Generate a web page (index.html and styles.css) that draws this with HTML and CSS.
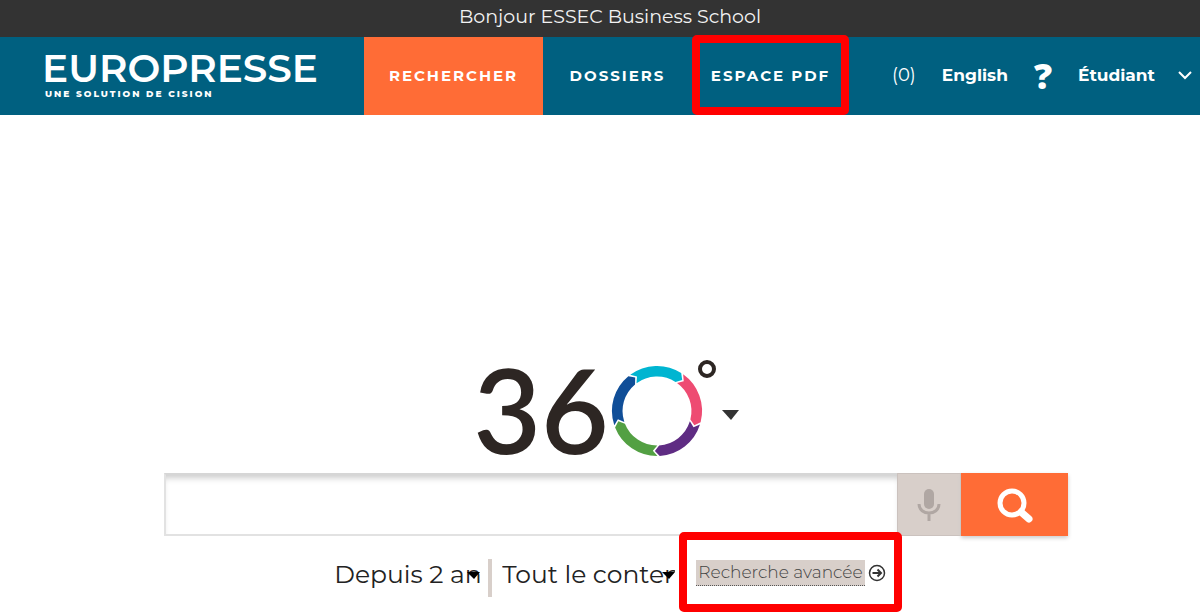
FILE: index.html
```html
<!DOCTYPE html>
<html lang="fr">
<head>
    <meta charset="UTF-8">
    <meta name="viewport" content="width=device-width, initial-scale=1.0">
    <title>Europresse</title>
    <link rel="stylesheet" href="styles.css">
</head>
<body>
    <div class="welcome">Bonjour ESSEC Business School</div>
    <header class="header">
        <a href="#" class="brand">
            <span class="brand-name">EUROPRESSE</span>
            <span class="brand-tagline">UNE SOLUTION DE CISION</span>
        </a>
        <nav class="menu">
            <a href="#" class="menu-item search-item active">RECHERCHER</a>
            <a href="#" class="menu-item folder-item">DOSSIERS</a>
            <a href="#" class="menu-item pdf-item">ESPACE PDF</a>
        </nav>
        <div class="tools">
            <a href="#" class="count">(0)</a>
            <a href="#" class="lang">English</a>
            <a href="#" class="help" aria-label="Aide">?</a>
            <button type="button" class="account">
                Étudiant
                <svg width="16" height="10" viewBox="0 0 16 10"><path d="M2 2l6 6 6-6" fill="none" stroke="#fff" stroke-width="2"/></svg>
            </button>
        </div>
    </header>

    <main class="search-page">
        <button type="button" class="logo360" aria-label="360°">
            <span class="digits">36</span>
            <svg class="ring" width="130" height="100" viewBox="0 0 130 100">
                <defs>
                    <path id="arrow" d="M-26.8-36.2A45 45 0 0 1 24.2-38L25.2-31.1L18.5-29.1A34.5 34.5 0 0 0-20.5-27.7L-20-34.6Z"/>
                </defs>
                <g transform="translate(48 53)">
                    <use href="#arrow" fill="#00b5d1"/>
                    <use href="#arrow" fill="#ee4b72" transform="rotate(72)"/>
                    <use href="#arrow" fill="#5f2c83" transform="rotate(144)"/>
                    <use href="#arrow" fill="#53a043" transform="rotate(216)"/>
                    <use href="#arrow" fill="#104e98" transform="rotate(288)"/>
                </g>
                <circle cx="98" cy="11" r="7" fill="none" stroke="#2d2623" stroke-width="4"/>
                <path d="M113 52h17l-8 10z" fill="#333"/>
            </svg>
        </button>

        <form class="search-bar">
            <input type="text" class="search-input" aria-label="Rechercher">
            <button type="button" class="mic" aria-label="Recherche vocale">
                <svg width="24" height="34" viewBox="0 0 24 34">
                    <rect x="7" y="1" width="10" height="20" rx="5" fill="#b0a7a3"/>
                    <path d="M2 16c0 12 20 12 20 0M12 25v8" fill="none" stroke="#b0a7a3" stroke-width="3"/>
                </svg>
            </button>
            <button type="submit" class="go" aria-label="Lancer la recherche">
                <svg width="36" height="36" viewBox="0 0 36 36">
                    <circle cx="15" cy="16" r="12" fill="none" stroke="#fff" stroke-width="5"/>
                    <path d="M24 25l8 7" fill="none" stroke="#fff" stroke-width="7" stroke-linecap="round"/>
                </svg>
            </button>
        </form>

        <div class="filters">
            <div class="select period">
                <select aria-label="Période">
                    <option>Depuis 2 ans</option>
                </select>
                <svg width="13" height="9" viewBox="0 0 13 9"><path d="M0 2h13l-6 7z"/></svg>
            </div>
            <div class="select content">
                <select aria-label="Contenu">
                    <option>Tout le contenu</option>
                </select>
                <svg width="13" height="9" viewBox="0 0 13 9"><path d="M0 2h13l-6 7z"/></svg>
            </div>
            <div class="advanced">
                <a href="#">Recherche avancée</a>
                <svg width="18" height="18" viewBox="0 0 18 18" fill="none" stroke="#333">
                    <circle cx="9" cy="9" r="7.5" stroke-width="1.5"/>
                    <path d="M4.500 9h8M9.500 5.500L13 9l-3.500 3.500" stroke-width="2"/>
                </svg>
            </div>
        </div>
    </main>
</body>
</html>
```

FILE: styles.css
```css
* {
    box-sizing: border-box;
}
body {
    margin: 0;
    font-family: Montserrat, Inter, sans-serif;
    background-color: #fff;
    color: #222;
}
a {
    color: inherit;
    text-decoration: none;
}
button {
    font-family: inherit;
    border: none;
    padding: 0;
    background: none;
    cursor: pointer;
}
.welcome {
    height: 37px;
    line-height: 33px;
    padding-left: 20px;
    background-color: #333;
    color: #f2f2f2;
    font-size: 19px;
    text-align: center;
}

/* Header */
.header {
    display: flex;
    height: 78px;
    background-color: #006080;
    color: #fff;
}
.brand {
    display: flex;
    flex-direction: column;
    width: 364px;
    padding: 12px 0 0 42px;
}
.brand-name {
    font-size: 39px;
    line-height: 38px;
    font-weight: 600;
}
.brand-tagline {
    padding-left: 3px;
    font-size: 9px;
    line-height: 13px;
    font-weight: 800;
    letter-spacing: 2px;
}
.menu {
    display: flex;
}
.menu-item {
    display: flex;
    align-items: center;
    justify-content: center;
    padding-bottom: 2px;
    font-size: 15px;
    font-weight: 700;
    letter-spacing: 2px;
}
.search-item {
    width: 179px;
}
.folder-item {
    width: 149px;
}
.pdf-item {
    position: relative;
    width: 157px;
}
.menu-item.active {
    background-color: #ff6c36;
}
/* highlight frames */
.pdf-item::after,
.advanced::after {
    content: "";
    position: absolute;
    border: 8px solid #f00;
    border-radius: 5px;
    pointer-events: none;
}
.pdf-item::after {
    inset: -2px 0 0;
}
.tools {
    display: flex;
    flex: 1;
    align-items: center;
    justify-content: space-between;
    padding: 0 7px 2px 43px;
    font-size: 18px;
}
.lang {
    font-size: 17px;
    font-weight: 700;
}
.help {
    font-family: "Open Sans", sans-serif;
    font-size: 36px;
    font-weight: 800;
}
.account {
    display: flex;
    align-items: center;
    gap: 22px;
    color: #fff;
    font-size: 17px;
    font-weight: 700;
}

/* Search */
.search-page {
    padding: 243px 132px 0 164px;
}
.logo360 {
    display: flex;
    height: 100px;
    margin: 0 auto 15px;
    padding-right: 20px;
    color: #2d2623;
}
.digits {
    font-family: Lato, sans-serif;
    font-size: 117px;
    line-height: 103px;
    font-weight: 600;
}
.ring {
    flex: none;
}
.search-bar {
    display: flex;
    height: 63px;
}
.search-input {
    flex: 1;
    min-width: 0;
    padding: 0 16px;
    border: 2px solid #e2e2e2;
    border-top-color: #d6d6d6;
    border-right: none;
    box-shadow: inset 0 6px 6px -3px #ccc;
    font-family: inherit;
    font-size: 24px;
}
.mic,
.go {
    display: flex;
    align-items: center;
    justify-content: center;
}
.mic {
    width: 64px;
    border: 1px solid #cbc2be;
    background-color: #d8cfca;
}
.go {
    width: 107px;
    background-color: #ff6c36;
    box-shadow: 0 2px 4px #ccc;
}
.filters {
    display: flex;
    height: 76px;
    align-items: center;
    justify-content: center;
    padding: 8px 12px 0 0;
}
.select {
    position: relative;
    height: 38px;
}
.select select {
    width: 100%;
    height: 30px;
    padding: 0;
    appearance: none;
    border: none;
    background: none;
    color: #222;
    font-family: inherit;
    font-size: 25px;
}
.select svg {
    position: absolute;
    right: 0;
    top: 11px;
}
.period {
    width: 146px;
}
.content {
    width: 187px;
    margin-left: 8px;
    padding-left: 10px;
    border-left: 4px solid #d8cfca;
}
.advanced {
    position: relative;
    display: flex;
    align-items: center;
    gap: 3px;
    margin: 0 0 10px 21px;
}
.advanced::after {
    inset: -28px -16px -26px -17px;
}
.advanced a {
    padding: 0 2px;
    background-color: #d8cfca;
    border-bottom: 1px dotted #555;
    color: #444;
    font-size: 17px;
    line-height: 25px;
    font-weight: 300;
}
```
